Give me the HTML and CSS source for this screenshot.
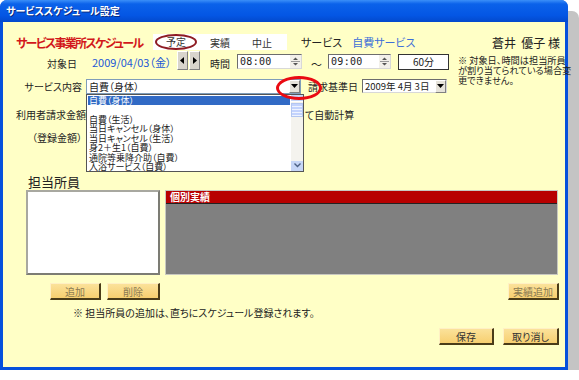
FILE: index.html
```html
<!DOCTYPE html>
<html lang="ja">
<head>
    <meta charset="UTF-8">
    <title>サービススケジュール設定</title>
    <link rel="stylesheet" href="styles.css">
</head>
<body>
    <div class="window">
        <div class="titlebar">サービススケジュール設定</div>
        <div class="client">
            <div class="row row-head">
                <div class="main-title">サービス事業所スケジュール</div>
                <div class="status-box">
                    <span class="status"><span class="current">予定</span></span>
                    <span class="status">実績</span>
                    <span class="status">中止</span>
                </div>
                <span class="svc-label">サービス</span>
                <span class="svc-name">自費サービス</span>
                <span class="client-name">蒼井&nbsp;&nbsp;優子 様</span>
            </div>

            <div class="row row-date">
                <span class="label label-date">対象日</span>
                <span class="date-value">2009/04/03（金）</span>
                <span class="nav-btns">
                    <span class="nav-btn"><svg width="5" height="7" viewBox="0 0 5 7"><path d="M4 0 L0 3.5 L4 7 Z" fill="#000"/></svg></span>
                    <span class="nav-btn"><svg width="5" height="7" viewBox="0 0 5 7"><path d="M1 0 L5 3.5 L1 7 Z" fill="#000"/></svg></span>
                </span>
                <span class="time-label">時間</span>
                <span class="spin-input">
                    <span class="spin-text">08:00</span>
                    <span class="spin"><svg width="9" height="11" viewBox="0 0 9 11"><path d="M2 4 H7 L4.5 1.5 Z M2 7 H7 L4.5 9.5 Z" fill="#555"/><path d="M0 5.5 H9" stroke="#999" stroke-width="1"/></svg></span>
                </span>
                <span class="tilde">～</span>
                <span class="spin-input spin-end">
                    <span class="spin-text">09:00</span>
                    <span class="spin"><svg width="9" height="11" viewBox="0 0 9 11"><path d="M2 4 H7 L4.5 1.5 Z M2 7 H7 L4.5 9.5 Z" fill="#555"/><path d="M0 5.5 H9" stroke="#999" stroke-width="1"/></svg></span>
                </span>
                <span class="minutes">60分</span>
                <p class="note">※ 対象日、時間は担当所員<br>が割り当てられている場合変<br>更できません。</p>
            </div>

            <div class="row row-service">
                <span class="label">サービス内容</span>
                <div class="combo combo-service">
                    <span class="combo-text">自費（身体）</span>
                    <span class="combo-btn"><svg width="7" height="4" viewBox="0 0 7 4"><path d="M0 0 H7 L3.5 4 Z" fill="#000"/></svg></span>
                    <ul class="drop-list">
                        <li class="selected">自費（身体）</li>
                        <li>&nbsp;</li>
                        <li>自費（生活）</li>
                        <li>当日キャンセル（身体）</li>
                        <li>当日キャンセル（生活）</li>
                        <li>身2＋生1（自費）</li>
                        <li>通院等乗降介助（自費）</li>
                        <li>入浴サービス（自費）</li>
                        <li class="scrollbar">
                            <span class="sb-up"></span>
                            <span class="sb-thumb"></span>
                            <span class="sb-down"><svg width="7" height="5" viewBox="0 0 7 5"><path d="M0.5 0.5 L3.5 3.5 L6.5 0.5" fill="none" stroke="#4d6185" stroke-width="1.4"/></svg></span>
                        </li>
                    </ul>
                    <span class="mark"></span>
                </div>
                <span class="base-label">請求基準日</span>
                <div class="combo combo-date">
                    <span class="combo-text">2009年 4月 3日</span>
                    <span class="combo-btn"><svg width="7" height="4" viewBox="0 0 7 4"><path d="M0 0 H7 L3.5 4 Z" fill="#000"/></svg></span>
                </div>
            </div>

            <div class="row row-amount">
                <span class="label">利用者請求金額</span>
                <span class="auto-calc">て自動計算</span>
            </div>

            <div class="row row-registered">
                <span class="label">（登録金額）</span>
            </div>

            <div class="row row-staff-title">担当所員</div>

            <div class="row row-panels">
                <div class="staff-list"></div>
                <div class="records">
                    <div class="records-head">個別実績</div>
                </div>
            </div>

            <div class="row row-staff-btns">
                <button class="btn btn-muted btn-add">追加</button>
                <button class="btn btn-muted btn-del">削除</button>
                <button class="btn btn-muted btn-record">実績追加</button>
            </div>

            <div class="row row-hint">※ 担当所員の追加は、直ちにスケジュール登録されます。</div>

            <div class="row row-actions">
                <button class="btn btn-save">保存</button>
                <button class="btn btn-cancel">取り消し</button>
            </div>
        </div>
    </div>
</body>
</html>
```

FILE: styles.css
```css
body {
    margin: 0;
    background: #fff;
    font-family: "Noto Sans CJK JP", "DejaVu Sans", sans-serif;
    font-feature-settings: "palt";
    font-size: 10px;
    color: #222;
}

.window {
    width: 568px;
    height: 370px;
    box-sizing: border-box;
    background: #0550dc;
    border-radius: 7px 7px 0 0;
    box-shadow: 11px 11px 0 #c4c4c4;
    display: flex;
    flex-direction: column;
}

.titlebar {
    height: 22px;
    line-height: 22px;
    padding-left: 6px;
    color: #fff;
    font-weight: bold;
    font-size: 10px;
    text-shadow: 1px 1px 0 #0a2a80;
    background: linear-gradient(#3b8ff8 0%, #0b62ea 18%, #0456e4 70%, #0349cc 100%);
    border-radius: 7px 7px 0 0;
}

.client {
    flex: 1;
    margin: 0 3px 3px 3px;
    background: #ffffc6;
    padding: 11px 5px 0 13px;
    display: flex;
    flex-direction: column;
}

.row {
    display: flex;
    align-items: center;
}

.row > * {
    flex-shrink: 0;
    white-space: nowrap;
}

.label {
    width: 66px;
    text-align: right;
}

/* header row */
.row-head {
    height: 18px;
}

.main-title {
    color: #d2181b;
    font-weight: bold;
    font-size: 12px;
    letter-spacing: -1.7px;
    width: 132px;
}

.status-box {
    margin-left: 5px;
    width: 134px;
    height: 16px;
    background: #fff;
    display: flex;
    align-items: center;
}

.status {
    width: 42px;
    text-align: center;
    color: #333;
}

.status:first-child {
    width: 46px;
}

.status .current {
    display: inline-block;
    width: 38px;
    height: 12px;
    line-height: 12px;
    border: 2px solid #8e1c24;
    border-radius: 50%;
}

.svc-label {
    margin-left: 14px;
    font-size: 11px;
}

.svc-name {
    margin-left: 10px;
    font-size: 11px;
    color: #3d6fd8;
}

.client-name {
    margin-left: auto;
    font-size: 12px;
}

/* date row */
.row-date {
    height: 20px;
    align-items: flex-start;
}

.label-date {
    padding-right: 5px;
    box-sizing: border-box;
    margin-top: 5px;
}

.date-value {
    margin-left: 10px;
    margin-top: 3px;
    color: #2458d6;
    font-size: 11px;
    width: 83px;
}

.nav-btns {
    margin-left: 2px;
    display: flex;
}

.nav-btn {
    width: 11px;
    height: 19px;
    box-sizing: border-box;
    background: #d8d4cc;
    border: 1px solid;
    border-color: #fff #808080 #808080 #fff;
    display: flex;
    align-items: center;
    justify-content: center;
}

.nav-btn + .nav-btn {
    margin-left: 1px;
}

.time-label {
    margin-left: 10px;
    margin-top: 5px;
}

.spin-input {
    margin-left: 7px;
    width: 65px;
    height: 15px;
    margin-top: 3px;
    box-sizing: border-box;
    background: #fff;
    border: 1px solid;
    border-color: #6d6d6d #d8d8d8 #d8d8d8 #6d6d6d;
    display: flex;
    align-items: center;
}

.spin-text {
    padding-left: 2px;
    font-family: "DejaVu Sans Mono", monospace;
    font-size: 10px;
    letter-spacing: 0.3px;
    flex: 1;
}

.spin {
    width: 11px;
    height: 13px;
    display: flex;
    align-items: center;
    justify-content: center;
    background: #f2f0ea;
}

.spin-end {
    margin-left: 6px;
    width: 63px;
}

.tilde {
    margin-left: 9px;
    margin-top: 5px;
    font-size: 11px;
}

.minutes {
    margin-left: 7px;
    width: 51px;
    height: 16px;
    margin-top: 3px;
    box-sizing: border-box;
    border: 1px solid #333;
    background: #fff;
    text-align: center;
    line-height: 14px;
}

.note {
    margin: 4px 0 0 9px;
    width: 106px;
    font-size: 9.2px;
    line-height: 10px;
}

/* service row */
.row-service {
    height: 16px;
    margin-top: 7px;
}

.combo {
    position: relative;
    height: 15px;
    box-sizing: border-box;
    background: #fff;
    border: 1px solid #7f9db9;
    display: flex;
    align-items: center;
}

.combo-service {
    margin-left: 4px;
    width: 215px;
}

.combo-text {
    flex: 1;
    padding-left: 2px;
    white-space: nowrap;
}

.combo-btn {
    width: 11px;
    height: 13px;
    box-sizing: border-box;
    background: #e6e3da;
    border: 1px solid;
    border-color: #fff #808080 #808080 #fff;
    display: flex;
    align-items: center;
    justify-content: center;
}

.drop-list {
    position: absolute;
    left: -1px;
    top: 14px;
    width: 218px;
    height: 78px;
    margin: 0;
    padding: 1px 13px 0 1px;
    box-sizing: border-box;
    list-style: none;
    background: #fff;
    border: 1px solid #555;
    z-index: 2;
}

.drop-list li {
    height: 9.55px;
    line-height: 9.55px;
    padding-left: 1px;
    font-size: 9px;
    white-space: nowrap;
}

.drop-list li.selected {
    background: #316ac5;
    color: #fff;
}

.drop-list li.scrollbar {
    position: absolute;
    right: 0;
    top: 0;
    width: 12px;
    height: 100%;
    padding: 0;
    background: #f4f3ee;
    display: flex;
    flex-direction: column;
}

.sb-up {
    height: 6px;
    background: #c6d6f7;
    border-bottom: 1px solid #fff;
}

.sb-thumb {
    height: 12px;
    margin-top: 1px;
    background: repeating-linear-gradient(#c3d3fd 0 2px, #eef3ff 2px 3px);
    border: 1px solid #b3c6f0;
}

.sb-down {
    margin-top: auto;
    height: 10px;
    background: #c6d6f7;
    display: flex;
    align-items: center;
    justify-content: center;
}

.mark {
    position: absolute;
    left: 189px;
    top: -4px;
    width: 40px;
    height: 18px;
    border: 3px solid #ea0a12;
    border-radius: 50%;
    z-index: 3;
}

.base-label {
    margin-left: 7px;
}

.combo-date {
    margin-left: 4px;
    width: 85px;
    height: 14px;
    border-color: #6d6d6d #d8d8d8 #d8d8d8 #6d6d6d;
}

.combo-date .combo-text {
    font-size: 9.5px;
}

/* amount rows */
.row-amount {
    height: 16px;
    margin-top: 12px;
}

.auto-calc {
    margin-left: 223px;
}

.row-registered {
    height: 16px;
    margin-top: 7px;
}

.row-staff-title {
    height: 18px;
    margin-top: 27px;
    padding-left: 12px;
    font-size: 13px;
}

/* panels */
.row-panels {
    height: 85px;
    align-items: stretch;
}

.staff-list {
    margin-left: 10px;
    width: 134px;
    box-sizing: border-box;
    background: #fff;
    border: 2px solid;
    border-color: #a8a8a0 #7c7c74 #7c7c74 #a8a8a0;
}

.records {
    margin-left: 5px;
    width: 393px;
    background: #808080;
    border: 1px solid #c8c8c0;
    box-sizing: border-box;
}

.records-head {
    height: 12px;
    line-height: 12px;
    padding-left: 4px;
    background: #b80000;
    border-bottom: 1px solid #222;
    color: #fff;
    font-weight: bold;
}

/* buttons */
.btn {
    font-family: inherit;
    font-feature-settings: "palt";
    font-size: 10px;
    height: 17px;
    padding: 0;
    box-sizing: border-box;
    background: linear-gradient(#fbe29a, #f7cf70);
    border: 1px solid;
    border-width: 1px 2px 2px 1px;
    border-color: #fff0c4 #4a3c18 #4a3c18 #fff0c4;
    color: #333;
}

.btn-muted {
    color: #8a7a52;
}

.row-staff-btns {
    height: 17px;
    margin-top: 8px;
    padding-right: 1px;
}

.btn-add {
    margin-left: 34px;
    width: 51px;
}

.btn-del {
    margin-left: 6px;
    width: 53px;
}

.btn-record {
    margin-left: auto;
    width: 51px;
}

.row-hint {
    height: 14px;
    margin-top: 5px;
    padding-left: 57px;
}

.row-actions {
    height: 17px;
    margin-top: 9px;
    justify-content: flex-end;
    padding-right: 1px;
}

.btn-save {
    width: 55px;
}

.btn-cancel {
    margin-left: 9px;
    width: 56px;
}
```
